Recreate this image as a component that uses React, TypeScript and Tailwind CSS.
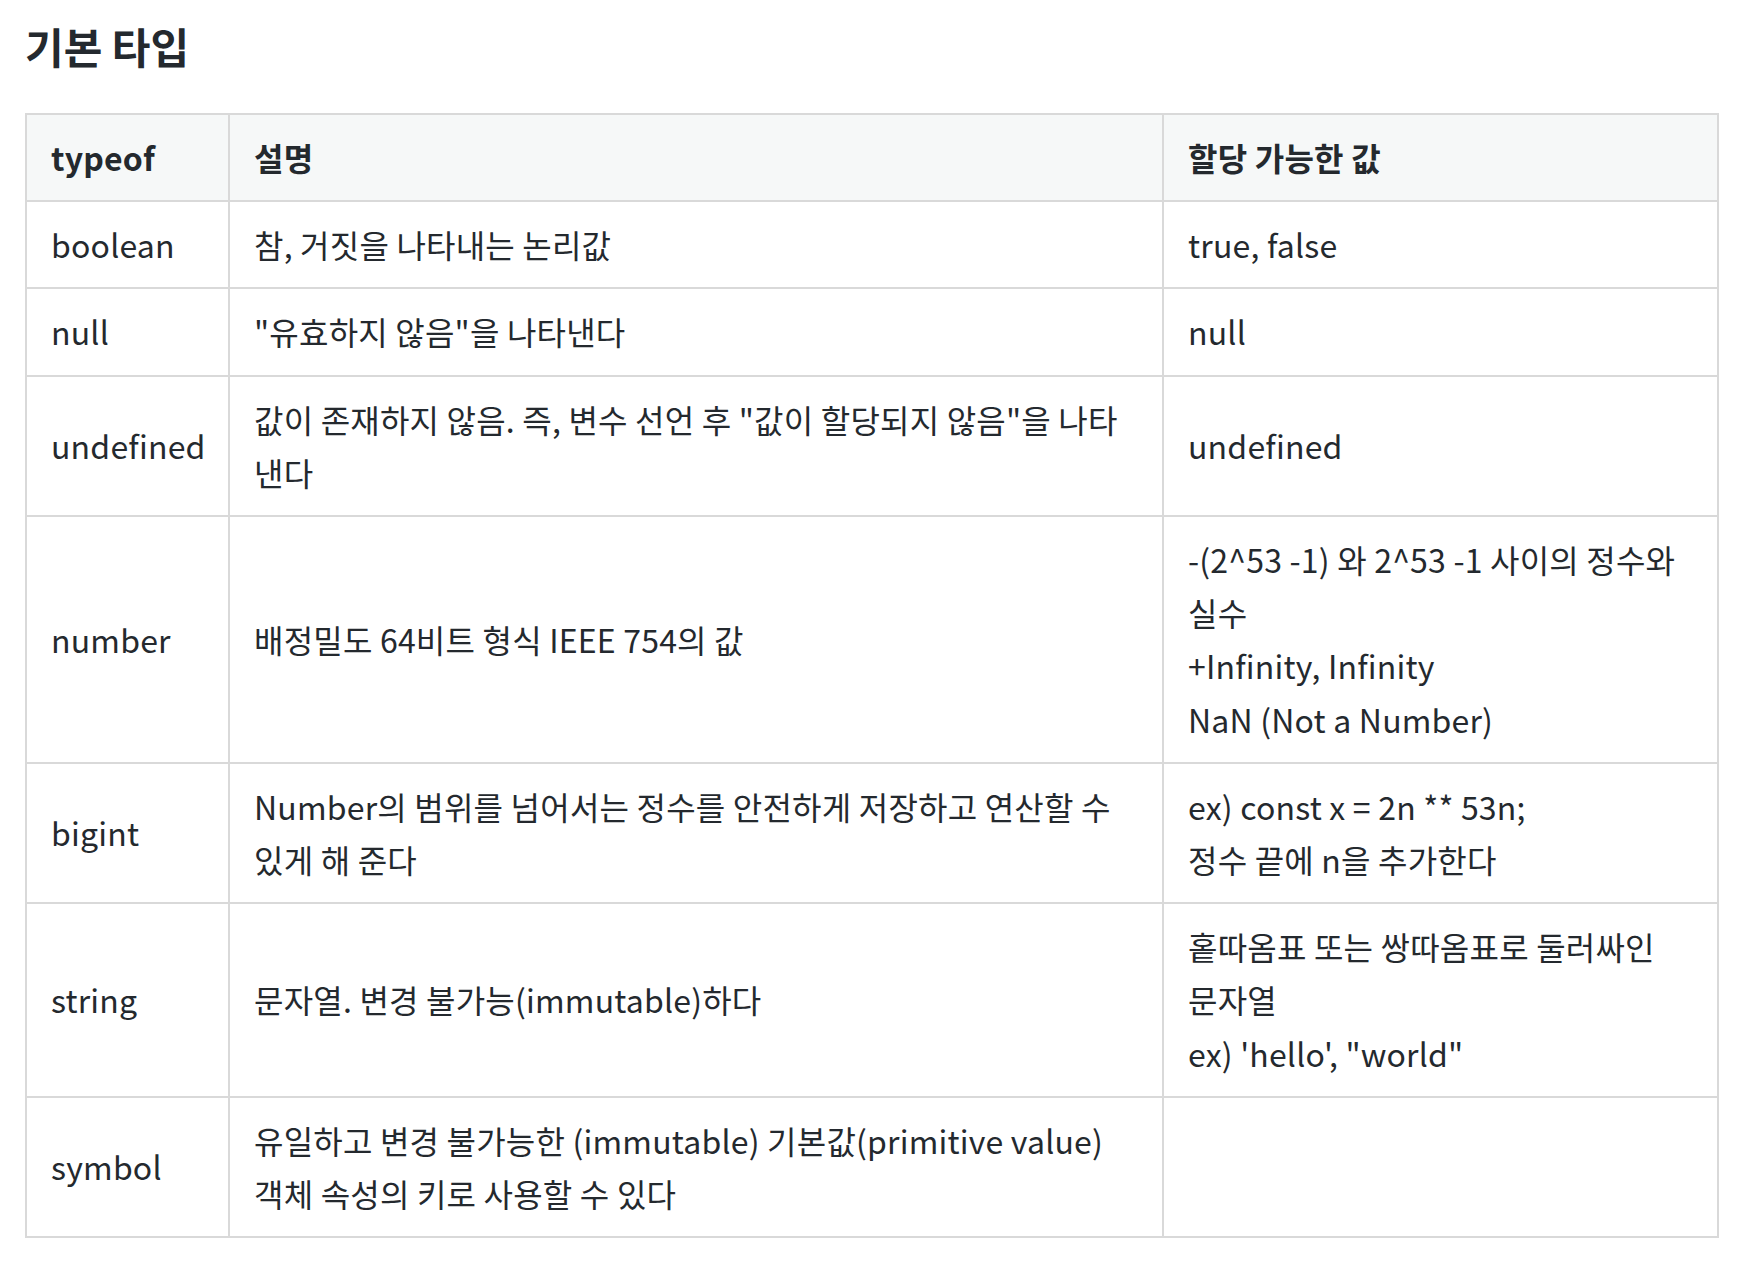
import React from "react";

type Row = { t: string; d: React.ReactNode[]; v: React.ReactNode[] };

const rows: Row[] = [
  { t: "boolean", d: ["참, 거짓을 나타내는 논리값"], v: ["true, false"] },
  { t: "null", d: ['"유효하지 않음"을 나타낸다'], v: ["null"] },
  {
    t: "undefined",
    d: ['값이 존재하지 않음. 즉, 변수 선언 후 "값이 할당되지 않음"을 나타', "낸다"],
    v: ["undefined"],
  },
  {
    t: "number",
    d: ["배정밀도 64비트 형식 IEEE 754의 값"],
    v: ["-(2^53 -1) 와 2^53 -1 사이의 정수와", "실수", "+Infinity, Infinity", "NaN (Not a Number)"],
  },
  {
    t: "bigint",
    d: ["Number의 범위를 넘어서는 정수를 안전하게 저장하고 연산할 수", "있게 해 준다"],
    v: ["ex) const x = 2n ** 53n;", "정수 끝에 n을 추가한다"],
  },
  {
    t: "string",
    d: ["문자열. 변경 불가능(immutable)하다"],
    v: ["홑따옴표 또는 쌍따옴표로 둘러싸인", "문자열", "ex) 'hello', \"world\""],
  },
  {
    t: "symbol",
    d: ["유일하고 변경 불가능한 (immutable) 기본값(primitive value)", "객체 속성의 키로 사용할 수 있다"],
    v: [],
  },
];

function Lines({ items }: { items: React.ReactNode[] }) {
  return (
    <>
      {items.map((x, i) => (
        <div key={i} className="whitespace-nowrap">
          {x}
        </div>
      ))}
    </>
  );
}

export default function App() {
  return (
    <div
      className="bg-white text-[#24292e] px-[25px] pt-[17px] pb-8"
      style={{ fontFamily: '"Noto Sans CJK KR", "Noto Sans", sans-serif' }}
    >
      <h2 className="text-[42px] font-bold leading-[58px] m-0">기본 타입</h2>
      <table className="mt-[38px] w-[1692px] border-collapse table-fixed text-[32px] leading-[53.2px] tracking-[0.2px]">
        <colgroup>
          <col className="w-[203px]" />
          <col className="w-[934px]" />
          <col className="w-[555px]" />
        </colgroup>
        <thead>
          <tr className="bg-[#f6f8f8]">
            <th className="border-2 border-[#d9d9d9] px-[24px] py-[16px] text-left font-bold align-middle">typeof</th>
            <th className="border-2 border-[#d9d9d9] px-[24px] py-[16px] text-left font-bold align-middle">설명</th>
            <th className="border-2 border-[#d9d9d9] px-[24px] py-[16px] text-left font-bold align-middle">할당 가능한 값</th>
          </tr>
        </thead>
        <tbody>
          {rows.map((r) => (
            <tr key={r.t}>
              <td className="border-2 border-[#d9d9d9] px-[24px] py-[16px] align-middle">{r.t}</td>
              <td className="border-2 border-[#d9d9d9] px-[24px] py-[16px] align-middle">
                <Lines items={r.d} />
              </td>
              <td className="border-2 border-[#d9d9d9] px-[24px] py-[16px] align-middle">
                <Lines items={r.v} />
              </td>
            </tr>
          ))}
        </tbody>
      </table>
    </div>
  );
}
